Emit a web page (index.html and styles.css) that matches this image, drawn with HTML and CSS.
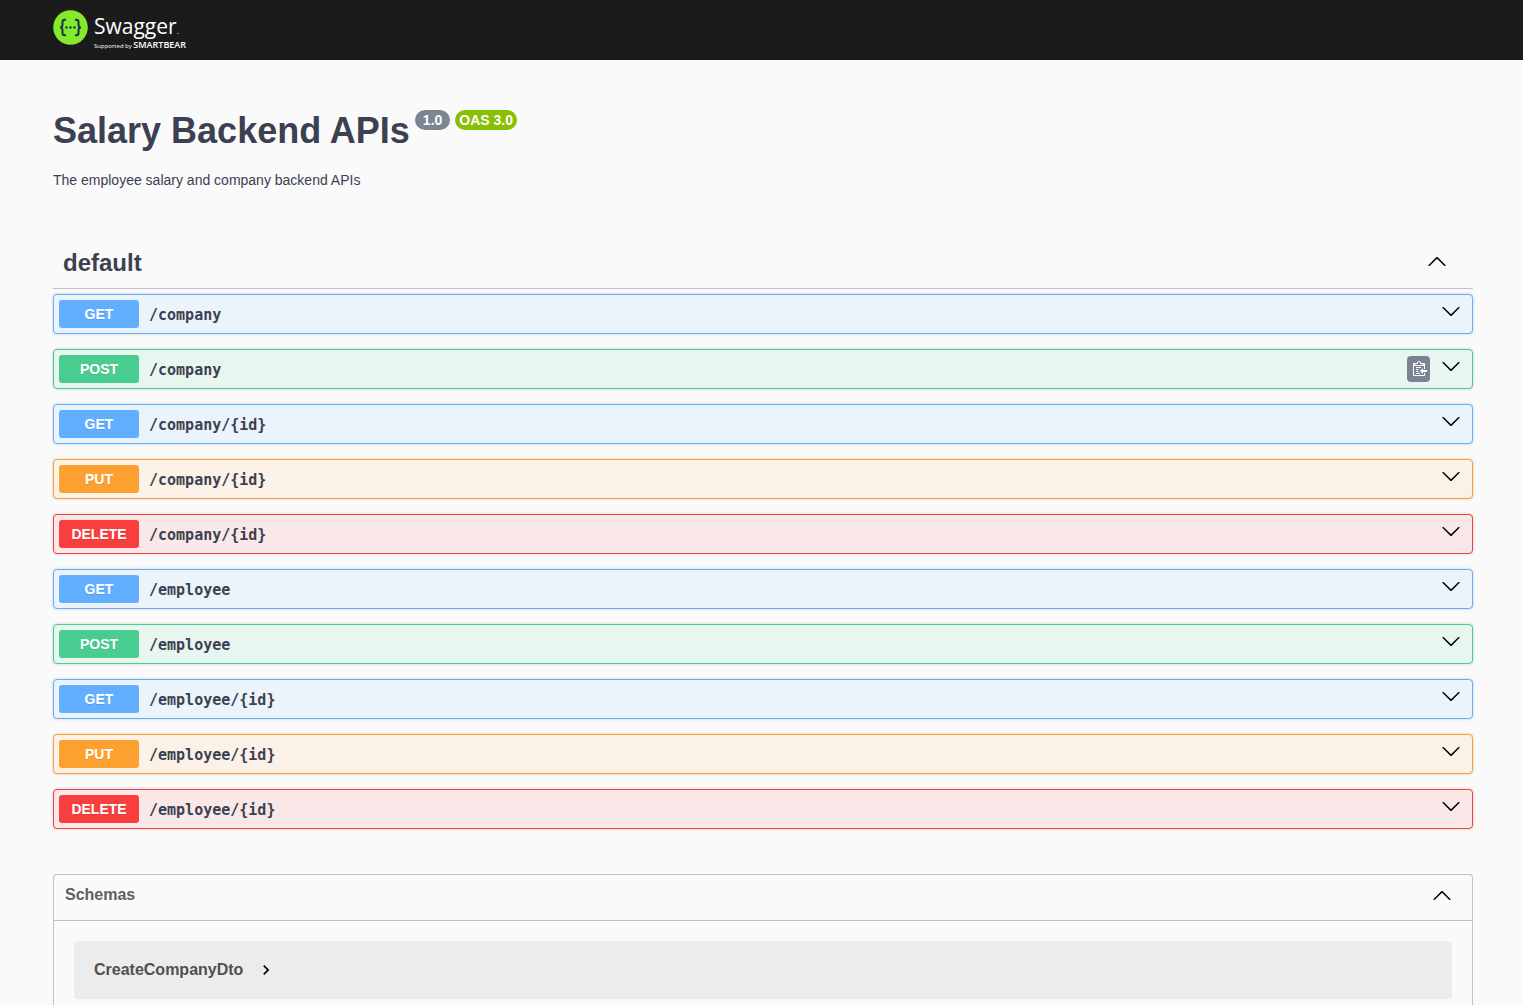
FILE: index.html
```html
<!DOCTYPE html>
<html lang="en">
<head>
<meta charset="utf-8">
<title>Swagger UI</title>
<meta name="viewport" content="width=device-width, initial-scale=1">
<link rel="stylesheet" href="styles.css">
</head>
<body>
<svg class="defs" width="0" height="0" aria-hidden="true">
  <symbol id="arrow-down" viewBox="0 0 20 20"><path d="M17.418 6.109c.272-.268.709-.268.979 0s.271.701 0 .969l-7.908 7.83c-.27.268-.707.268-.979 0l-7.908-7.83c-.27-.268-.27-.701 0-.969.271-.268.709-.268.979 0L10 13.25z"/></symbol>
  <symbol id="arrow-up" viewBox="0 0 20 20"><path d="M17.418 14.908c.272.268.709.268.979 0s.271-.701 0-.969l-7.908-7.83c-.27-.268-.707-.268-.979 0l-7.908 7.83c-.27.268-.27.701 0 .969.271.268.709.268.979 0L10 7.767z"/></symbol>
  <symbol id="arrow-right" viewBox="0 0 24 24"><path d="M10 6L8.59 7.41 13.17 12l-4.58 4.59L10 18l6-6z"/></symbol>
  <symbol id="copy" viewBox="0 0 15 16"><path fill="#fff" fill-rule="evenodd" d="M4 12h4v1H4v-1zm5-6H4v1h5V6zm2 3V7l-3 3 3 3v-2h4V9h-4zM6.500 8H4v1h2.500V8zM4 11h2.500v-1H4v1zm8 1h1v2c-.02.28-.11.52-.3.700-.19.180-.42.280-.7.300H2c-.55 0-1-.45-1-1V3c0-.55.45-1 1-1h3c0-1.110.89-2 2-2 1.110 0 2 .89 2 2h3c.55 0 1 .45 1 1v5h-1V5H2v9h10v-2zM3 4h8c0-.55-.45-1-1-1H9c-.55 0-1-.45-1-1s-.45-1-1-1-1 .45-1 1-.45 1-1 1H4c-.55 0-1 .45-1 1z"/></symbol>
</svg>

<header class="topbar">
  <a class="logo" href="#" aria-label="Swagger, supported by SmartBear">
    <svg class="logo-mark" viewBox="0 0 35 35" aria-hidden="true">
      <circle cx="17.500" cy="17.500" r="17.300" fill="#85ea2d"/>
      <g fill="none" stroke="#173647" stroke-width="2">
        <path d="M13 9.800h-1.300q-2.200 0-2.200 2.200v2.700q0 2.500-2.300 2.800q2.300.3 2.300 2.800V23q0 2.200 2.200 2.200H13"/>
        <path d="M22 9.800h1.300q2.200 0 2.200 2.200v2.700q0 2.500 2.300 2.800q-2.300.3-2.300 2.800V23q0 2.200-2.200 2.200H22"/>
      </g>
      <g fill="#173647"><circle cx="13.500" cy="17.500" r="1.200"/><circle cx="17.500" cy="17.500" r="1.200"/><circle cx="21.500" cy="17.500" r="1.200"/></g>
    </svg>
    <span class="logo-text">
      <span class="logo-name">Swagger<span class="logo-dot">.</span></span>
      <span class="logo-by">Supported by <b>SMARTBEAR</b></span>
    </span>
  </a>
</header>

<main class="page">
  <section class="info">
    <div class="title-row">
      <h1>Salary Backend APIs</h1>
      <span class="version">1.0</span>
      <span class="version oas">OAS 3.0</span>
    </div>
    <p>The employee salary and company backend APIs</p>
  </section>

  <section class="tag">
    <div class="tag-head">
      <h2>default</h2>
      <button class="icon-button" aria-label="Collapse default"><svg class="arrow"><use href="#arrow-up"/></svg></button>
    </div>
    <div class="operations">
      <div class="op get"><button class="op-main"><span class="method">GET</span><span class="path">/company</span></button><button class="icon-button" aria-label="Expand"><svg class="arrow"><use href="#arrow-down"/></svg></button></div>
      <div class="op post"><button class="op-main"><span class="method">POST</span><span class="path">/company</span></button><button class="copy-button" aria-label="Copy to clipboard"><svg width="15" height="16"><use href="#copy"/></svg></button><button class="icon-button" aria-label="Expand"><svg class="arrow"><use href="#arrow-down"/></svg></button></div>
      <div class="op get"><button class="op-main"><span class="method">GET</span><span class="path">/company/{id}</span></button><button class="icon-button" aria-label="Expand"><svg class="arrow"><use href="#arrow-down"/></svg></button></div>
      <div class="op put"><button class="op-main"><span class="method">PUT</span><span class="path">/company/{id}</span></button><button class="icon-button" aria-label="Expand"><svg class="arrow"><use href="#arrow-down"/></svg></button></div>
      <div class="op delete"><button class="op-main"><span class="method">DELETE</span><span class="path">/company/{id}</span></button><button class="icon-button" aria-label="Expand"><svg class="arrow"><use href="#arrow-down"/></svg></button></div>
      <div class="op get"><button class="op-main"><span class="method">GET</span><span class="path">/employee</span></button><button class="icon-button" aria-label="Expand"><svg class="arrow"><use href="#arrow-down"/></svg></button></div>
      <div class="op post"><button class="op-main"><span class="method">POST</span><span class="path">/employee</span></button><button class="icon-button" aria-label="Expand"><svg class="arrow"><use href="#arrow-down"/></svg></button></div>
      <div class="op get"><button class="op-main"><span class="method">GET</span><span class="path">/employee/{id}</span></button><button class="icon-button" aria-label="Expand"><svg class="arrow"><use href="#arrow-down"/></svg></button></div>
      <div class="op put"><button class="op-main"><span class="method">PUT</span><span class="path">/employee/{id}</span></button><button class="icon-button" aria-label="Expand"><svg class="arrow"><use href="#arrow-down"/></svg></button></div>
      <div class="op delete"><button class="op-main"><span class="method">DELETE</span><span class="path">/employee/{id}</span></button><button class="icon-button" aria-label="Expand"><svg class="arrow"><use href="#arrow-down"/></svg></button></div>
    </div>
  </section>

  <section class="models">
    <div class="models-head">
      <h3>Schemas</h3>
      <button class="icon-button" aria-label="Collapse schemas"><svg class="arrow"><use href="#arrow-up"/></svg></button>
    </div>
    <div class="models-body">
      <button class="model">CreateCompanyDto<svg class="model-arrow"><use href="#arrow-right"/></svg></button>
    </div>
  </section>
</main>
</body>
</html>
```
FILE: styles.css
```css
* { box-sizing: border-box; }

body {
  margin: 0;
  min-height: 100vh;
  display: flex;
  flex-direction: column;
  background: #fafafa;
  color: #3b4151;
  font-family: "Liberation Sans", Arial, sans-serif;
}

h1, h2, h3, p { margin: 0; }

button {
  margin: 0;
  padding: 0;
  border: 0;
  background: none;
  color: inherit;
  font: inherit;
  cursor: pointer;
}

svg { display: block; }

.defs { position: absolute; }

/* Top bar */
.topbar {
  height: 60px;
  padding: 10px 50px 0 53px;
  background: #1b1b1b;
}

.logo {
  display: inline-flex;
  gap: 6px;
  color: #fff;
  text-decoration: none;
  font-family: "Open Sans", "Noto Sans", sans-serif;
}

.logo-mark { width: 35px; height: 35px; }

.logo-text { display: flex; flex-direction: column; }

.logo-name { font-size: 21px; line-height: 32px; }

.logo-dot { font-size: 8px; line-height: 8px; }

.logo-by { font-size: 6px; line-height: 6px; }

.logo-by b { font-size: 9px; font-weight: 600; }

/* Page */
.page {
  flex: 1;
  display: flex;
  flex-direction: column;
  padding: 0 50px 0 53px;
}

.info { padding: 50px 0; }

.title-row { display: flex; align-items: flex-start; gap: 5px; }

h1 { font-size: 36px; line-height: 42px; }

.version {
  padding: 2px 8px;
  border-radius: 20px;
  background: #7d8492;
  color: #fff;
  font-size: 14px;
  font-weight: 700;
  line-height: 16px;
}

.oas { padding: 2px 4px; background: #89bf04; }

.info p { margin-top: 20px; font-size: 14px; line-height: 16px; }

/* Operations */
.tag-head {
  display: flex;
  justify-content: space-between;
  align-items: center;
  height: 51px;
  padding: 0 26px 0 10px;
  border-bottom: 1px solid #c0c2c6;
}

.tag-head .icon-button { padding-bottom: 4px; }

h2 { font-size: 24px; line-height: 28px; }

.arrow { width: 20px; height: 20px; fill: #000; }

.operations {
  display: flex;
  flex-direction: column;
  gap: 15px;
  padding-top: 5px;
}

.op {
  display: flex;
  align-items: center;
  padding: 5px 11px 5px 5px;
  border: 1px solid var(--accent);
  border-radius: 4px;
  background: var(--tint);
  box-shadow: 0 0 3px rgba(0, 0, 0, .19);
}

.op > .icon-button { padding-bottom: 6px; }

.get { --accent: #61affe; --tint: #ebf3fb; }
.post { --accent: #49cc90; --tint: #e8f6f0; }
.put { --accent: #fca130; --tint: #fbf1e6; }
.delete { --accent: #f93e3e; --tint: #fae7e7; }

.op-main {
  flex: 1;
  display: flex;
  align-items: center;
  gap: 10px;
  text-align: left;
}

.method {
  width: 80px;
  border-radius: 3px;
  background: var(--accent);
  color: #fff;
  font-size: 14px;
  font-weight: 700;
  line-height: 28px;
  text-align: center;
  text-shadow: 0 1px 0 rgba(0, 0, 0, .1);
}

.path {
  padding-top: 2px;
  font-family: "DejaVu Sans Mono", monospace;
  font-size: 15px;
  font-weight: 700;
  line-height: 20px;
}

.copy-button {
  display: flex;
  align-items: center;
  justify-content: flex-end;
  width: 23px;
  height: 26px;
  margin-right: 11px;
  padding-right: 3px;
  border-radius: 4px;
  background: #7d8293;
}

/* Schemas */
.models {
  flex: 1;
  margin-top: 45px;
  border: 1px solid #c0c2c6;
  border-bottom: 0;
  border-radius: 4px 4px 0 0;
}

.models-head {
  display: flex;
  align-items: center;
  justify-content: space-between;
  height: 46px;
  padding: 0 20px 5px 11px;
  border-bottom: 1px solid #c0c2c6;
}

h3 { color: #606060; font-size: 16px; line-height: 20px; }

.models-body { padding: 20px 20px 0; }

.model {
  display: flex;
  align-items: center;
  gap: 13px;
  width: 100%;
  height: 58px;
  padding: 0 20px;
  border-radius: 4px;
  background: #ececec;
  color: #505050;
  font-size: 16px;
  font-weight: 700;
}

.model-arrow { width: 20px; height: 20px; fill: #000; }
```
